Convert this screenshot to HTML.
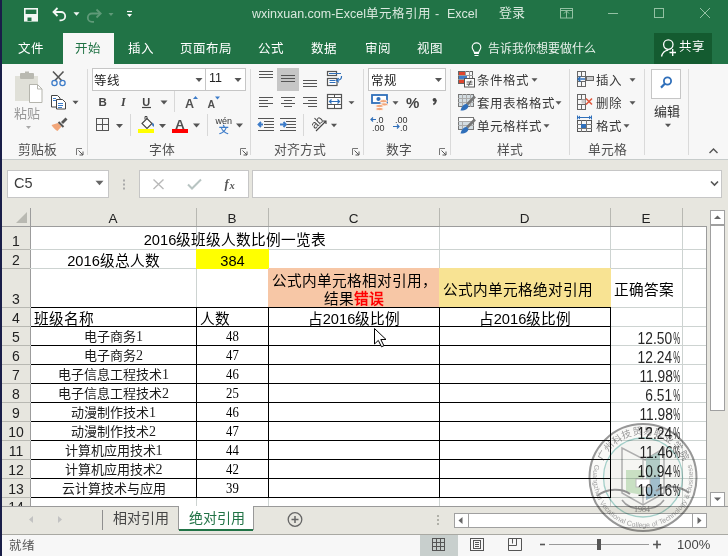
<!DOCTYPE html><html lang="zh-CN"><head><meta charset="utf-8"><style>
*{margin:0;padding:0;box-sizing:border-box}
html,body{width:728px;height:556px;overflow:hidden;background:#e7e6df;font-family:"Liberation Sans",sans-serif;color:#222;position:relative}
.a{position:absolute}
.nw{white-space:nowrap}
</style></head><body>
<div class="a" style="left:0;top:0;width:728px;height:64px;background:#217346"></div>
<div class="a" style="left:0;top:0;width:2px;height:556px;background:#191e48;z-index:60"></div>
<div class="a" style="left:0;top:64px;width:728px;height:95px;background:#f7f7f7"></div>
<div class="a" style="left:0;top:159px;width:728px;height:1px;background:#c7cccb"></div>
<div class="a" style="left:252px;top:3px;font-size:12.5px;color:#d9e8de;white-space:nowrap">wxinxuan.com-Excel单元格引用</div>
<div class="a" style="left:435px;top:7px;font-size:12.5px;color:#d9e8de;white-space:nowrap">-</div>
<div class="a" style="left:447px;top:7px;font-size:12.5px;color:#d9e8de;white-space:nowrap">Excel</div>
<div class="a" style="left:499px;top:2px;font-size:13px;color:#d9e8de;white-space:nowrap">登录</div>
<div class="a" style="left:63px;top:33px;width:51px;height:31px;background:#f7f7f7"></div>
<div class="a" style="left:18px;top:38px;font-size:12.5px;color:#fff;white-space:nowrap">文件</div>
<div class="a" style="left:75px;top:38px;font-size:12.5px;color:#217346;white-space:nowrap">开始</div>
<div class="a" style="left:128px;top:38px;font-size:12.5px;color:#fff;white-space:nowrap">插入</div>
<div class="a" style="left:180px;top:38px;font-size:12.5px;color:#fff;white-space:nowrap">页面布局</div>
<div class="a" style="left:258px;top:38px;font-size:12.5px;color:#fff;white-space:nowrap">公式</div>
<div class="a" style="left:311px;top:38px;font-size:12.5px;color:#fff;white-space:nowrap">数据</div>
<div class="a" style="left:365px;top:38px;font-size:12.5px;color:#fff;white-space:nowrap">审阅</div>
<div class="a" style="left:417px;top:38px;font-size:12.5px;color:#fff;white-space:nowrap">视图</div>
<div class="a" style="left:488px;top:39px;font-size:12px;color:#e8f1eb;white-space:nowrap">告诉我你想要做什么</div>
<div class="a" style="left:654px;top:33px;width:58px;height:31px;background:#145b30"></div>
<div class="a" style="left:679px;top:36px;font-size:12.5px;color:#fff;white-space:nowrap">共享</div>
<div class="a" style="left:92px;top:68px;width:114px;height:23px;background:#fff;border:1px solid #c6c6c6"></div>
<div class="a" style="left:205px;top:68px;width:41px;height:23px;background:#fff;border:1px solid #c6c6c6"></div>
<div class="a" style="left:94px;top:70px;font-size:12.5px;color:#222;white-space:nowrap">等线</div>
<div class="a" style="left:209px;top:71px;font-size:12.5px;color:#222;white-space:nowrap">11</div>
<div class="a" style="left:368px;top:68px;width:78px;height:23px;background:#fff;border:1px solid #c6c6c6"></div>
<div class="a" style="left:371px;top:70px;font-size:12.5px;color:#222;white-space:nowrap">常规</div>
<div class="a" style="left:277px;top:68px;width:22px;height:23px;background:#c6c6c6"></div>
<div class="a" style="left:651px;top:69px;width:30px;height:30px;background:#fff;border:1px solid #c6c6c6"></div>
<div class="a" style="left:14px;top:103px;font-size:13px;color:#999;white-space:nowrap">粘贴</div>
<div class="a" style="left:477px;top:70px;font-size:12.5px;color:#3a3a3a;white-space:nowrap">条件格式</div>
<div class="a" style="left:477px;top:93px;font-size:12.5px;color:#3a3a3a;white-space:nowrap">套用表格格式</div>
<div class="a" style="left:477px;top:116px;font-size:12.5px;color:#3a3a3a;white-space:nowrap">单元格样式</div>
<div class="a" style="left:596px;top:70px;font-size:12.5px;color:#3a3a3a;white-space:nowrap">插入</div>
<div class="a" style="left:596px;top:93px;font-size:12.5px;color:#3a3a3a;white-space:nowrap">删除</div>
<div class="a" style="left:596px;top:116px;font-size:12.5px;color:#3a3a3a;white-space:nowrap">格式</div>
<div class="a" style="left:654px;top:101px;font-size:13px;color:#333;white-space:nowrap">编辑</div>
<div class="a" style="left:18px;top:139px;font-size:12.8px;color:#505050;white-space:nowrap">剪贴板</div>
<div class="a" style="left:149px;top:139px;font-size:12.8px;color:#505050;white-space:nowrap">字体</div>
<div class="a" style="left:274px;top:139px;font-size:12.8px;color:#505050;white-space:nowrap">对齐方式</div>
<div class="a" style="left:386px;top:139px;font-size:12.8px;color:#505050;white-space:nowrap">数字</div>
<div class="a" style="left:497px;top:139px;font-size:12.8px;color:#505050;white-space:nowrap">样式</div>
<div class="a" style="left:588px;top:139px;font-size:12.8px;color:#505050;white-space:nowrap">单元格</div>
<div class="a" style="left:87px;top:69px;width:1px;height:86px;background:#dadada"></div>
<div class="a" style="left:250px;top:69px;width:1px;height:86px;background:#dadada"></div>
<div class="a" style="left:363px;top:69px;width:1px;height:86px;background:#dadada"></div>
<div class="a" style="left:450px;top:69px;width:1px;height:86px;background:#dadada"></div>
<div class="a" style="left:569px;top:69px;width:1px;height:86px;background:#dadada"></div>
<div class="a" style="left:644px;top:69px;width:1px;height:86px;background:#dadada"></div>
<div class="a" style="left:688px;top:69px;width:1px;height:86px;background:#dadada"></div>
<div class="a" style="left:7px;top:170px;width:102px;height:28px;background:#fff;border:1px solid #c6c6c6"></div>
<div class="a nw" style="left:14px;top:175px;font-size:14.5px;color:#3c3c3c">C5</div>
<div class="a" style="left:139px;top:170px;width:110px;height:28px;background:#fff;border:1px solid #c6c6c6"></div>
<div class="a" style="left:252px;top:170px;width:470px;height:28px;background:#fff;border:1px solid #c6c6c6"></div>
<div class="a" style="left:31px;top:227px;width:675px;height:279px;background:#fff"></div>
<div class="a" style="left:196px;top:208px;width:1px;height:18px;background:#b8b8b2"></div>
<div class="a" style="left:268px;top:208px;width:1px;height:18px;background:#b8b8b2"></div>
<div class="a" style="left:439px;top:208px;width:1px;height:18px;background:#b8b8b2"></div>
<div class="a" style="left:610px;top:208px;width:1px;height:18px;background:#b8b8b2"></div>
<div class="a" style="left:682px;top:208px;width:1px;height:18px;background:#b8b8b2"></div>
<div class="a" style="left:2px;top:226px;width:704px;height:1px;background:#9c9c9c"></div>
<div class="a" style="left:30px;top:208px;width:1px;height:298px;background:#9c9c9c"></div>
<div class="a" style="left:196px;top:227px;width:1px;height:279px;background:#cdd3d1"></div>
<div class="a" style="left:268px;top:227px;width:1px;height:279px;background:#cdd3d1"></div>
<div class="a" style="left:439px;top:227px;width:1px;height:279px;background:#cdd3d1"></div>
<div class="a" style="left:610px;top:227px;width:1px;height:279px;background:#cdd3d1"></div>
<div class="a" style="left:682px;top:227px;width:1px;height:279px;background:#cdd3d1"></div>
<div class="a" style="left:2px;top:249px;width:704px;height:1px;background:#cdd3d1"></div>
<div class="a" style="left:2px;top:268px;width:704px;height:1px;background:#cdd3d1"></div>
<div class="a" style="left:2px;top:307px;width:704px;height:1px;background:#cdd3d1"></div>
<div class="a" style="left:2px;top:326px;width:704px;height:1px;background:#cdd3d1"></div>
<div class="a" style="left:2px;top:345px;width:704px;height:1px;background:#cdd3d1"></div>
<div class="a" style="left:2px;top:364px;width:704px;height:1px;background:#cdd3d1"></div>
<div class="a" style="left:2px;top:383px;width:704px;height:1px;background:#cdd3d1"></div>
<div class="a" style="left:2px;top:402px;width:704px;height:1px;background:#cdd3d1"></div>
<div class="a" style="left:2px;top:421px;width:704px;height:1px;background:#cdd3d1"></div>
<div class="a" style="left:2px;top:440px;width:704px;height:1px;background:#cdd3d1"></div>
<div class="a" style="left:2px;top:459px;width:704px;height:1px;background:#cdd3d1"></div>
<div class="a" style="left:2px;top:478px;width:704px;height:1px;background:#cdd3d1"></div>
<div class="a" style="left:2px;top:497px;width:704px;height:1px;background:#cdd3d1"></div>
<div class="a" style="left:2px;top:249px;width:28px;height:1px;background:#b8b8b2"></div>
<div class="a" style="left:2px;top:268px;width:28px;height:1px;background:#b8b8b2"></div>
<div class="a" style="left:2px;top:307px;width:28px;height:1px;background:#b8b8b2"></div>
<div class="a" style="left:2px;top:326px;width:28px;height:1px;background:#b8b8b2"></div>
<div class="a" style="left:2px;top:345px;width:28px;height:1px;background:#b8b8b2"></div>
<div class="a" style="left:2px;top:364px;width:28px;height:1px;background:#b8b8b2"></div>
<div class="a" style="left:2px;top:383px;width:28px;height:1px;background:#b8b8b2"></div>
<div class="a" style="left:2px;top:402px;width:28px;height:1px;background:#b8b8b2"></div>
<div class="a" style="left:2px;top:421px;width:28px;height:1px;background:#b8b8b2"></div>
<div class="a" style="left:2px;top:440px;width:28px;height:1px;background:#b8b8b2"></div>
<div class="a" style="left:2px;top:459px;width:28px;height:1px;background:#b8b8b2"></div>
<div class="a" style="left:2px;top:478px;width:28px;height:1px;background:#b8b8b2"></div>
<div class="a" style="left:2px;top:497px;width:28px;height:1px;background:#b8b8b2"></div>
<div class="a" style="left:706px;top:226px;width:1px;height:280px;background:#9c9c9c"></div>
<div class="a" style="left:2px;top:506px;width:726px;height:1px;background:#9a9a9a;z-index:5"></div>
<div class="a nw" style="left:30px;top:211px;width:166px;text-align:center;font-size:13.5px;color:#222">A</div>
<div class="a nw" style="left:196px;top:211px;width:72px;text-align:center;font-size:13.5px;color:#222">B</div>
<div class="a nw" style="left:268px;top:211px;width:171px;text-align:center;font-size:13.5px;color:#222">C</div>
<div class="a nw" style="left:439px;top:211px;width:171px;text-align:center;font-size:13.5px;color:#222">D</div>
<div class="a nw" style="left:610px;top:211px;width:72px;text-align:center;font-size:13.5px;color:#222">E</div>
<div class="a nw" style="left:2px;top:233px;width:28px;height:16px;line-height:16px;text-align:center;font-size:14px;color:#222">1</div>
<div class="a nw" style="left:2px;top:252px;width:28px;height:16px;line-height:16px;text-align:center;font-size:14px;color:#222">2</div>
<div class="a nw" style="left:2px;top:291px;width:28px;height:16px;line-height:16px;text-align:center;font-size:14px;color:#222">3</div>
<div class="a nw" style="left:2px;top:310px;width:28px;height:16px;line-height:16px;text-align:center;font-size:14px;color:#222">4</div>
<div class="a nw" style="left:2px;top:329px;width:28px;height:16px;line-height:16px;text-align:center;font-size:14px;color:#222">5</div>
<div class="a nw" style="left:2px;top:348px;width:28px;height:16px;line-height:16px;text-align:center;font-size:14px;color:#222">6</div>
<div class="a nw" style="left:2px;top:367px;width:28px;height:16px;line-height:16px;text-align:center;font-size:14px;color:#222">7</div>
<div class="a nw" style="left:2px;top:386px;width:28px;height:16px;line-height:16px;text-align:center;font-size:14px;color:#222">8</div>
<div class="a nw" style="left:2px;top:405px;width:28px;height:16px;line-height:16px;text-align:center;font-size:14px;color:#222">9</div>
<div class="a nw" style="left:2px;top:424px;width:28px;height:16px;line-height:16px;text-align:center;font-size:14px;color:#222">10</div>
<div class="a nw" style="left:2px;top:443px;width:28px;height:16px;line-height:16px;text-align:center;font-size:14px;color:#222">11</div>
<div class="a nw" style="left:2px;top:462px;width:28px;height:16px;line-height:16px;text-align:center;font-size:14px;color:#222">12</div>
<div class="a nw" style="left:2px;top:481px;width:28px;height:16px;line-height:16px;text-align:center;font-size:14px;color:#222">13</div>
<div class="a nw" style="left:2px;top:498px;width:28px;height:8px;overflow:hidden;text-align:center;font-size:14px;line-height:18px;color:#222">14</div>
<div class="a" style="left:196px;top:249px;width:73px;height:20px;background:#ffff00;z-index:2"></div>
<div class="a" style="left:268px;top:268px;width:172px;height:39px;background:#f7c7a6;z-index:2"></div>
<div class="a" style="left:439px;top:268px;width:172px;height:39px;background:#f8e393;z-index:2"></div>
<div class="a" style="left:31px;top:307px;width:580px;height:1px;background:#000;z-index:4"></div>
<div class="a" style="left:31px;top:326px;width:580px;height:1px;background:#000;z-index:4"></div>
<div class="a" style="left:31px;top:345px;width:580px;height:1px;background:#000;z-index:4"></div>
<div class="a" style="left:31px;top:364px;width:580px;height:1px;background:#000;z-index:4"></div>
<div class="a" style="left:31px;top:383px;width:580px;height:1px;background:#000;z-index:4"></div>
<div class="a" style="left:31px;top:402px;width:580px;height:1px;background:#000;z-index:4"></div>
<div class="a" style="left:31px;top:421px;width:580px;height:1px;background:#000;z-index:4"></div>
<div class="a" style="left:31px;top:440px;width:580px;height:1px;background:#000;z-index:4"></div>
<div class="a" style="left:31px;top:459px;width:580px;height:1px;background:#000;z-index:4"></div>
<div class="a" style="left:31px;top:478px;width:580px;height:1px;background:#000;z-index:4"></div>
<div class="a" style="left:31px;top:497px;width:580px;height:1px;background:#000;z-index:4"></div>
<div class="a" style="left:196px;top:307px;width:1px;height:191px;background:#000;z-index:4"></div>
<div class="a" style="left:268px;top:307px;width:1px;height:191px;background:#000;z-index:4"></div>
<div class="a" style="left:439px;top:307px;width:1px;height:191px;background:#000;z-index:4"></div>
<div class="a" style="left:610px;top:307px;width:1px;height:191px;background:#000;z-index:4"></div>
<div class="a" style="z-index:3;left:34px;top:227px;width:402px;height:22px;display:flex;align-items:center;justify-content:center;font-size:14.67px;color:#000;white-space:nowrap"><span>2016级班级人数比例一览表</span></div>
<div class="a" style="z-index:3;left:34px;top:250px;width:159px;height:18px;display:flex;align-items:center;justify-content:center;font-size:14.67px;color:#000;white-space:nowrap"><span>2016级总人数</span></div>
<div class="a" style="z-index:3;left:200px;top:252px;width:65px;height:18px;display:flex;align-items:center;justify-content:center;font-size:14.67px;color:#000;white-space:nowrap"><span>384</span></div>
<div class="a" style="z-index:3;left:269px;top:272px;width:170px;height:38px;font-size:14.67px;line-height:18px;text-align:center;color:#000">公式内单元格相对引用，<br>结果<b style="color:#ff0000">错误</b></div>
<div class="a" style="z-index:3;left:443px;top:269px;width:164px;height:38px;display:flex;align-items:center;justify-content:flex-start;font-size:14.67px;color:#000;white-space:nowrap"><span>公式内单元格绝对引用</span></div>
<div class="a" style="z-index:3;left:614px;top:269px;width:65px;height:38px;display:flex;align-items:center;justify-content:flex-start;font-size:14.67px;color:#000;white-space:nowrap"><span>正确答案</span></div>
<div class="a" style="z-index:3;left:34px;top:308px;width:159px;height:18px;display:flex;align-items:center;justify-content:flex-start;font-size:14.67px;color:#000;white-space:nowrap"><span>班级名称</span></div>
<div class="a" style="z-index:3;left:200px;top:308px;width:65px;height:18px;display:flex;align-items:center;justify-content:flex-start;font-size:14.67px;color:#000;white-space:nowrap"><span>人数</span></div>
<div class="a" style="z-index:3;left:272px;top:308px;width:164px;height:18px;display:flex;align-items:center;justify-content:center;font-size:14.67px;color:#000;white-space:nowrap"><span>占2016级比例</span></div>
<div class="a" style="z-index:3;left:443px;top:308px;width:164px;height:18px;display:flex;align-items:center;justify-content:center;font-size:14.67px;color:#000;white-space:nowrap"><span>占2016级比例</span></div>
<div class="a" style="z-index:3;left:34px;top:326px;width:159px;height:18px;display:flex;align-items:center;justify-content:center;font-size:13px;color:#1a1a1a;white-space:nowrap"><span>电子商务<span style="font-family:Liberation Serif,serif;font-size:14px">1</span></span></div>
<div class="a" style="z-index:3;left:200px;top:327px;width:65px;height:18px;display:flex;align-items:center;justify-content:center;font-family:Liberation Serif,serif;font-size:14.5px;color:#000;white-space:nowrap;transform:scaleX(.88)"><span>48</span></div>
<div class="a" style="z-index:3;right:55.5px;top:331px;font-size:16px;line-height:15px;color:#262626;white-space:nowrap;transform:scaleX(.86);transform-origin:right">12.50</div>
<div class="a" style="z-index:3;right:48px;top:331px;font-size:16px;line-height:15px;color:#262626;white-space:nowrap;transform:scaleX(.49);transform-origin:right">%</div>
<div class="a" style="z-index:3;left:34px;top:345px;width:159px;height:18px;display:flex;align-items:center;justify-content:center;font-size:13px;color:#1a1a1a;white-space:nowrap"><span>电子商务<span style="font-family:Liberation Serif,serif;font-size:14px">2</span></span></div>
<div class="a" style="z-index:3;left:200px;top:346px;width:65px;height:18px;display:flex;align-items:center;justify-content:center;font-family:Liberation Serif,serif;font-size:14.5px;color:#000;white-space:nowrap;transform:scaleX(.88)"><span>47</span></div>
<div class="a" style="z-index:3;right:55.5px;top:350px;font-size:16px;line-height:15px;color:#262626;white-space:nowrap;transform:scaleX(.86);transform-origin:right">12.24</div>
<div class="a" style="z-index:3;right:48px;top:350px;font-size:16px;line-height:15px;color:#262626;white-space:nowrap;transform:scaleX(.49);transform-origin:right">%</div>
<div class="a" style="z-index:3;left:34px;top:364px;width:159px;height:18px;display:flex;align-items:center;justify-content:center;font-size:13px;color:#1a1a1a;white-space:nowrap"><span>电子信息工程技术<span style="font-family:Liberation Serif,serif;font-size:14px">1</span></span></div>
<div class="a" style="z-index:3;left:200px;top:365px;width:65px;height:18px;display:flex;align-items:center;justify-content:center;font-family:Liberation Serif,serif;font-size:14.5px;color:#000;white-space:nowrap;transform:scaleX(.88)"><span>46</span></div>
<div class="a" style="z-index:3;right:55.5px;top:369px;font-size:16px;line-height:15px;color:#262626;white-space:nowrap;transform:scaleX(.86);transform-origin:right">11.98</div>
<div class="a" style="z-index:3;right:48px;top:369px;font-size:16px;line-height:15px;color:#262626;white-space:nowrap;transform:scaleX(.49);transform-origin:right">%</div>
<div class="a" style="z-index:3;left:34px;top:383px;width:159px;height:18px;display:flex;align-items:center;justify-content:center;font-size:13px;color:#1a1a1a;white-space:nowrap"><span>电子信息工程技术<span style="font-family:Liberation Serif,serif;font-size:14px">2</span></span></div>
<div class="a" style="z-index:3;left:200px;top:384px;width:65px;height:18px;display:flex;align-items:center;justify-content:center;font-family:Liberation Serif,serif;font-size:14.5px;color:#000;white-space:nowrap;transform:scaleX(.88)"><span>25</span></div>
<div class="a" style="z-index:3;right:55.5px;top:388px;font-size:16px;line-height:15px;color:#262626;white-space:nowrap;transform:scaleX(.86);transform-origin:right">6.51</div>
<div class="a" style="z-index:3;right:48px;top:388px;font-size:16px;line-height:15px;color:#262626;white-space:nowrap;transform:scaleX(.49);transform-origin:right">%</div>
<div class="a" style="z-index:3;left:34px;top:402px;width:159px;height:18px;display:flex;align-items:center;justify-content:center;font-size:13px;color:#1a1a1a;white-space:nowrap"><span>动漫制作技术<span style="font-family:Liberation Serif,serif;font-size:14px">1</span></span></div>
<div class="a" style="z-index:3;left:200px;top:403px;width:65px;height:18px;display:flex;align-items:center;justify-content:center;font-family:Liberation Serif,serif;font-size:14.5px;color:#000;white-space:nowrap;transform:scaleX(.88)"><span>46</span></div>
<div class="a" style="z-index:3;right:55.5px;top:407px;font-size:16px;line-height:15px;color:#262626;white-space:nowrap;transform:scaleX(.86);transform-origin:right">11.98</div>
<div class="a" style="z-index:3;right:48px;top:407px;font-size:16px;line-height:15px;color:#262626;white-space:nowrap;transform:scaleX(.49);transform-origin:right">%</div>
<div class="a" style="z-index:3;left:34px;top:421px;width:159px;height:18px;display:flex;align-items:center;justify-content:center;font-size:13px;color:#1a1a1a;white-space:nowrap"><span>动漫制作技术<span style="font-family:Liberation Serif,serif;font-size:14px">2</span></span></div>
<div class="a" style="z-index:3;left:200px;top:422px;width:65px;height:18px;display:flex;align-items:center;justify-content:center;font-family:Liberation Serif,serif;font-size:14.5px;color:#000;white-space:nowrap;transform:scaleX(.88)"><span>47</span></div>
<div class="a" style="z-index:3;right:55.5px;top:426px;font-size:16px;line-height:15px;color:#262626;white-space:nowrap;transform:scaleX(.86);transform-origin:right">12.24</div>
<div class="a" style="z-index:3;right:48px;top:426px;font-size:16px;line-height:15px;color:#262626;white-space:nowrap;transform:scaleX(.49);transform-origin:right">%</div>
<div class="a" style="z-index:3;left:34px;top:440px;width:159px;height:18px;display:flex;align-items:center;justify-content:center;font-size:13px;color:#1a1a1a;white-space:nowrap"><span>计算机应用技术<span style="font-family:Liberation Serif,serif;font-size:14px">1</span></span></div>
<div class="a" style="z-index:3;left:200px;top:441px;width:65px;height:18px;display:flex;align-items:center;justify-content:center;font-family:Liberation Serif,serif;font-size:14.5px;color:#000;white-space:nowrap;transform:scaleX(.88)"><span>44</span></div>
<div class="a" style="z-index:3;right:55.5px;top:445px;font-size:16px;line-height:15px;color:#262626;white-space:nowrap;transform:scaleX(.86);transform-origin:right">11.46</div>
<div class="a" style="z-index:3;right:48px;top:445px;font-size:16px;line-height:15px;color:#262626;white-space:nowrap;transform:scaleX(.49);transform-origin:right">%</div>
<div class="a" style="z-index:3;left:34px;top:459px;width:159px;height:18px;display:flex;align-items:center;justify-content:center;font-size:13px;color:#1a1a1a;white-space:nowrap"><span>计算机应用技术<span style="font-family:Liberation Serif,serif;font-size:14px">2</span></span></div>
<div class="a" style="z-index:3;left:200px;top:460px;width:65px;height:18px;display:flex;align-items:center;justify-content:center;font-family:Liberation Serif,serif;font-size:14.5px;color:#000;white-space:nowrap;transform:scaleX(.88)"><span>42</span></div>
<div class="a" style="z-index:3;right:55.5px;top:464px;font-size:16px;line-height:15px;color:#262626;white-space:nowrap;transform:scaleX(.86);transform-origin:right">10.94</div>
<div class="a" style="z-index:3;right:48px;top:464px;font-size:16px;line-height:15px;color:#262626;white-space:nowrap;transform:scaleX(.49);transform-origin:right">%</div>
<div class="a" style="z-index:3;left:34px;top:478px;width:159px;height:18px;display:flex;align-items:center;justify-content:center;font-size:13px;color:#1a1a1a;white-space:nowrap"><span>云计算技术与应用</span></div>
<div class="a" style="z-index:3;left:200px;top:479px;width:65px;height:18px;display:flex;align-items:center;justify-content:center;font-family:Liberation Serif,serif;font-size:14.5px;color:#000;white-space:nowrap;transform:scaleX(.88)"><span>39</span></div>
<div class="a" style="z-index:3;right:55.5px;top:483px;font-size:16px;line-height:15px;color:#262626;white-space:nowrap;transform:scaleX(.86);transform-origin:right">10.16</div>
<div class="a" style="z-index:3;right:48px;top:483px;font-size:16px;line-height:15px;color:#262626;white-space:nowrap;transform:scaleX(.49);transform-origin:right">%</div>
<div class="a" style="left:710px;top:210px;width:15px;height:15px;background:#fff;border:1px solid #a0a0a0"></div>
<div class="a" style="left:710px;top:225px;width:15px;height:186px;background:#fff;border:1px solid #a0a0a0"></div>
<div class="a" style="left:710px;top:492px;width:15px;height:15px;background:#fff;border:1px solid #a0a0a0"></div>
<div class="a" style="left:2px;top:534px;width:726px;height:1px;background:#a9a9a3;z-index:5"></div>
<div class="a" style="left:102px;top:510px;width:1px;height:20px;background:#8f8f8f"></div>
<div class="a" style="left:178px;top:506px;width:76px;height:24px;background:#fff;border-left:1px solid #999;border-right:1px solid #999;z-index:6"></div>
<div class="a" style="left:179px;top:529px;width:74px;height:2px;background:#217346;z-index:7"></div>
<div class="a nw" style="left:113px;top:507px;font-size:14px;color:#444">相对引用</div>
<div class="a nw" style="left:189px;top:507px;font-size:14px;color:#217346;z-index:7">绝对引用</div>
<div class="a" style="left:454px;top:513px;width:15px;height:15px;background:#fff;border:1px solid #a0a0a0"></div>
<div class="a" style="left:468px;top:513px;width:225px;height:15px;background:#fff;border:1px solid #a0a0a0"></div>
<div class="a" style="left:692px;top:513px;width:15px;height:15px;background:#fff;border:1px solid #a0a0a0"></div>
<div class="a" style="left:0;top:535px;width:728px;height:21px;background:#f7f7f7"></div>
<div class="a" style="left:420px;top:535px;width:38px;height:21px;background:#c8cfcd"></div>
<div class="a nw" style="left:9px;top:535px;font-size:12.5px;color:#555">就绪</div>
<div class="a nw" style="left:677px;top:537px;font-size:13px;color:#444">100%</div>
<svg class="a" style="left:0;top:0;z-index:30" width="728" height="556" viewBox="0 0 728 556"><rect x="24.8" y="8.8" width="12.4" height="12" fill="none" stroke="#f3f7f4" stroke-width="1.6"/><rect x="24.5" y="14" width="13" height="7" fill="#f3f7f4"/><rect x="27.5" y="17.5" width="4" height="3.5" fill="#217346"/><path d="M54 12h7a4.2 4.2 0 0 1 0 8.4h-1.5" fill="none" stroke="#f3f7f4" stroke-width="1.8"/><path d="M57.5 8l-4 4 4 4" fill="none" stroke="#f3f7f4" stroke-width="1.8"/><path d="M73.5 12.25h6l-3.0 3.5z" fill="#f3f7f4"/><path d="M100 13.5h-8a4.2 4.2 0 0 0 0 8.4h2" fill="none" stroke="#5f9a78" stroke-width="1.8"/><path d="M96.5 9.5l4.2 4-4.2 4" fill="none" stroke="#5f9a78" stroke-width="1.8"/><path d="M108.5 13.0h5l-2.5 3z" fill="#5f9a78"/><path d="M127 11.5h5" stroke="#fff" stroke-width="1.2"/><path d="M127.0 14.0h5l-2.5 3z" fill="#fff"/><rect x="560.5" y="8.5" width="12" height="9.5" fill="none" stroke="#93c1a3" stroke-width="1"/><path d="M560.5 10.5h12M566.5 10.5v7.5M564 13.5l2.5-2.5 2.5 2.5" fill="none" stroke="#93c1a3" stroke-width="1"/><path d="M608 13.5h10" stroke="#93c1a3" stroke-width="1"/><rect x="654.5" y="8.5" width="9" height="9" fill="none" stroke="#93c1a3" stroke-width="1"/><path d="M700 8l10 10M710 8l-10 10" stroke="#93c1a3" stroke-width="1"/><path d="M472.2 47.2a4.3 4.3 0 1 1 8.6 0c0 2.2-1.7 3.2-2 5h-4.6c-.3-1.8-2-2.8-2-5z" fill="none" stroke="#fff" stroke-width="1.1"/><rect x="474" y="52" width="5" height="2" fill="#fff"/><path d="M474.5 55.5h4" stroke="#fff" stroke-width="1"/><circle cx="668.3" cy="44.6" r="4.7" fill="none" stroke="#fff" stroke-width="1.3"/><path d="M661.5 56.5c.8-3.5 3.3-6 6.8-6.4" fill="none" stroke="#fff" stroke-width="1.3"/><path d="M669.5 52.5h6.5M672.7 49v7" stroke="#fff" stroke-width="1.3"/><rect x="15" y="76" width="23" height="25" fill="#e0e0d8"/><rect x="20" y="73" width="14" height="6" rx="1" fill="#b9b9b1"/><rect x="25" y="71.5" width="4" height="3" fill="#b9b9b1"/><path d="M29.5 84.5h8l4.5 4.5v13.5h-12.5z" fill="#fff" stroke="#b5b5ad" stroke-width="1"/><path d="M37.5 84.5v4.5h4.5" fill="none" stroke="#b5b5ad" stroke-width="1"/><path d="M26.0 126.0h5l-2.5 3z" fill="#a8a8a8"/><path d="M53 71.5l9 9.5M63.5 71.5l-9 9.5" stroke="#555" stroke-width="1.6"/><circle cx="54.5" cy="83" r="2.6" fill="none" stroke="#3d7cc9" stroke-width="1.3"/><circle cx="62.5" cy="83" r="2.6" fill="none" stroke="#3d7cc9" stroke-width="1.3"/><path d="M51.5 95.5h6l2.5 2.5v9h-8.5z" fill="#fff" stroke="#444" stroke-width="1"/><path d="M56.5 99.5h6l3 3v6.5h-9z" fill="#fff" stroke="#444" stroke-width="1"/><path d="M53 98.5h3M53 100.5h3M58 103.5h5M58 105.5h5M58 107.5h4" stroke="#3d7cc9" stroke-width="1"/><path d="M72.5 100.75h6l-3.0 3.5z" fill="#555"/><path d="M61 122l4.5-4.5 2 2-4.5 4.5z" fill="#555"/><path d="M58 123l3.5 3.5-4 4.5c-1.5-.5-4.5-3.5-6-6z" fill="#f2a679"/><path d="M58.5 122l5 5" stroke="#555" stroke-width="2"/><path d="M76.5 155V148.5H82" fill="none" stroke="#777" stroke-width="1"/><path d="M78.5 150.5l4.5 4.5M83 151.5v3.5h-3.5" fill="none" stroke="#555" stroke-width="1"/><path d="M240.5 155V148.5H246" fill="none" stroke="#777" stroke-width="1"/><path d="M242.5 150.5l4.5 4.5M247 151.5v3.5h-3.5" fill="none" stroke="#555" stroke-width="1"/><path d="M352.5 155V148.5H358" fill="none" stroke="#777" stroke-width="1"/><path d="M354.5 150.5l4.5 4.5M359 151.5v3.5h-3.5" fill="none" stroke="#555" stroke-width="1"/><path d="M439.5 155V148.5H445" fill="none" stroke="#777" stroke-width="1"/><path d="M441.5 150.5l4.5 4.5M446 151.5v3.5h-3.5" fill="none" stroke="#555" stroke-width="1"/><path d="M195.5 78.0h7l-3.5 4z" fill="#555"/><path d="M234.5 78.0h7l-3.5 4z" fill="#555"/><path d="M435.0 78.0h7l-3.5 4z" fill="#555"/><text x="98.5" y="106" font-family="Liberation Sans" font-weight="bold" font-size="11.5" fill="#444">B</text><text x="121" y="106" font-family="Liberation Serif" font-style="italic" font-weight="bold" font-size="12" fill="#444">I</text><text x="142.2" y="106" font-family="Liberation Sans" font-weight="bold" font-size="11" fill="#444">U</text><path d="M142 107.5H151" stroke="#444" stroke-width="1.2"/><path d="M160.5 100.5h7l-3.5 4z" fill="#555"/><path d="M174.5 91V112" stroke="#d8d8d8" stroke-width="1"/><text x="185" y="108" font-family="Liberation Sans" font-weight="bold" font-size="12.5" fill="#505050">A</text><path d="M193 99h5l-2.5-3z" fill="#3d7cc9"/><text x="207.5" y="108" font-family="Liberation Sans" font-weight="bold" font-size="10.5" fill="#505050">A</text><path d="M215 96.5h5l-2.5 3z" fill="#3d7cc9"/><rect x="96.5" y="118.5" width="12" height="12" fill="none" stroke="#555" stroke-width="1"/><path d="M96 124.5H109" stroke="#555" stroke-width="1"/><path d="M102.5 118V131" stroke="#555" stroke-width="1"/><path d="M116.0 124.0h7l-3.5 4z" fill="#555"/><path d="M130.5 114V136" stroke="#d8d8d8" stroke-width="1"/><path d="M142 123.5l5-5 5 5-5 5z" fill="#fff" stroke="#444" stroke-width="1.1"/><path d="M145 119.5v-3h2v3" fill="none" stroke="#444" stroke-width="1"/><path d="M152.5 122.5c1.5 1 2 3 1 4.5l-1.5-2z" fill="#2f6fba"/><rect x="138" y="129" width="16" height="4" fill="#ffff00"/><path d="M159.0 124.0h7l-3.5 4z" fill="#555"/><text x="175" y="129" font-family="Liberation Sans" font-weight="bold" font-size="13.5" fill="#505050">A</text><rect x="172" y="129" width="16" height="4" fill="#ff0000"/><path d="M193.0 123.5h7l-3.5 4z" fill="#555"/><path d="M207.5 114V136" stroke="#d8d8d8" stroke-width="1"/><text x="215.5" y="124" font-family="Liberation Sans" font-size="9" fill="#333">wén</text><text x="219" y="133" font-family="Liberation Sans" font-size="9.5" font-weight="bold" fill="#3d7cc9">文</text><path d="M236.0 123.5h7l-3.5 4z" fill="#555"/><path d="M259 71.5H273" stroke="#555" stroke-width="1"/><path d="M259 74.5H273" stroke="#555" stroke-width="1"/><path d="M259 77.5H273" stroke="#555" stroke-width="1"/><path d="M281 75.5H295" stroke="#555" stroke-width="1"/><path d="M281 78.5H295" stroke="#555" stroke-width="1"/><path d="M281 81.5H295" stroke="#555" stroke-width="1"/><path d="M303 80.5H317" stroke="#555" stroke-width="1"/><path d="M303 83.5H317" stroke="#555" stroke-width="1"/><path d="M303 86.5H317" stroke="#555" stroke-width="1"/><rect x="327.5" y="71.5" width="9" height="4" fill="#fff" stroke="#555" stroke-width="1.2"/><path d="M329 73.5h12" stroke="#2f6fba" stroke-width="1"/><rect x="327.5" y="78.5" width="9.5" height="7" fill="#fff" stroke="#555" stroke-width="1.2"/><path d="M329.5 80.5h6M329.5 82.5h6" stroke="#2f6fba" stroke-width="1"/><path d="M341.5 76c.3 2.5-1.2 4.2-4.5 4.3" fill="none" stroke="#2f6fba" stroke-width="1.2"/><path d="M338.8 78.2l-2.2 2.1 2.2 2.1" fill="none" stroke="#2f6fba" stroke-width="1.2"/><path d="M259 97.5H273" stroke="#555" stroke-width="1"/><path d="M281 97.5H295" stroke="#555" stroke-width="1"/><path d="M303 97.5H317" stroke="#555" stroke-width="1"/><path d="M259 100.5H268" stroke="#555" stroke-width="1"/><path d="M284 100.5H292" stroke="#555" stroke-width="1"/><path d="M308 100.5H317" stroke="#555" stroke-width="1"/><path d="M259 103.5H273" stroke="#555" stroke-width="1"/><path d="M281 103.5H295" stroke="#555" stroke-width="1"/><path d="M303 103.5H317" stroke="#555" stroke-width="1"/><path d="M259 106.5H268" stroke="#555" stroke-width="1"/><path d="M284 106.5H292" stroke="#555" stroke-width="1"/><path d="M308 106.5H317" stroke="#555" stroke-width="1"/><rect x="327.5" y="94.5" width="14" height="14" fill="#fff" stroke="#555" stroke-width="1.2"/><path d="M327 97.5H342" stroke="#555" stroke-width="1"/><path d="M327 104.5H342" stroke="#555" stroke-width="1"/><path d="M334.5 94V98" stroke="#555" stroke-width="1"/><path d="M334.5 105V109" stroke="#555" stroke-width="1"/><path d="M329.5 101.5h10" stroke="#2f6fba" stroke-width="1"/><path d="M331.5 99.5l-2 2 2 2M337.5 99.5l2 2-2 2" fill="none" stroke="#2f6fba" stroke-width="1.2"/><path d="M348.5 101.2h6l-3.0 3z" fill="#555"/><path d="M258 118.5H274" stroke="#555" stroke-width="1"/><path d="M264 121.5H274" stroke="#555" stroke-width="1"/><path d="M264 124.5H274" stroke="#555" stroke-width="1"/><path d="M264 127.5H274" stroke="#555" stroke-width="1"/><path d="M258 130.5H274" stroke="#555" stroke-width="1"/><path d="M258 124.5h5M261 122l-2.5 2.5 2.5 2.5" fill="none" stroke="#3d7cc9" stroke-width="1.8"/><path d="M280 118.5H296" stroke="#555" stroke-width="1"/><path d="M286 121.5H296" stroke="#555" stroke-width="1"/><path d="M286 124.5H296" stroke="#555" stroke-width="1"/><path d="M286 127.5H296" stroke="#555" stroke-width="1"/><path d="M280 130.5H296" stroke="#555" stroke-width="1"/><path d="M280 124.5h6M283.5 122l2.5 2.5-2.5 2.5" fill="none" stroke="#3d7cc9" stroke-width="1.8"/><path d="M303.5 114V136" stroke="#d8d8d8" stroke-width="1"/><text x="0" y="0" transform="translate(315 129.5) rotate(-45)" font-family="Liberation Sans" font-size="11.5" fill="#444">ab</text><path d="M316 131l10-10M323 121h3v3" fill="none" stroke="#444" stroke-width="1.1"/><path d="M331.0 123.75h6l-3.0 3.5z" fill="#555"/><rect x="372" y="95" width="15" height="8" fill="#fff" stroke="#2f6fba" stroke-width="1.8"/><circle cx="378.5" cy="99" r="2.1" fill="#2f6fba"/><ellipse cx="383.5" cy="101.2" rx="3.8" ry="1.6" fill="#f2a679" stroke="#fff" stroke-width=".8"/><ellipse cx="384" cy="104.4" rx="3.8" ry="1.6" fill="#f2a679" stroke="#fff" stroke-width=".8"/><ellipse cx="379.5" cy="106" rx="3.8" ry="1.6" fill="#f2a679" stroke="#fff" stroke-width=".8"/><ellipse cx="379.5" cy="109" rx="3.8" ry="1.6" fill="#f2a679" stroke="#fff" stroke-width=".8"/><path d="M392.5 101.25h6l-3.0 3.5z" fill="#555"/><text x="406" y="107.5" font-family="Liberation Sans" font-weight="bold" font-size="15" fill="#444">%</text><circle cx="434.5" cy="99.8" r="1.9" fill="#444"/><path d="M436.1 100c0 2-1 3.5-2.8 4.5" fill="none" stroke="#444" stroke-width="1.5"/><text x="376" y="123" font-family="Liberation Sans" font-size="9" fill="#333">.0</text><text x="372" y="130.5" font-family="Liberation Sans" font-size="9" fill="#333">.00</text><path d="M371 119.5h5M373 117.5l-2 2 2 2" fill="none" stroke="#2f6fba" stroke-width="1.2"/><text x="395" y="123" font-family="Liberation Sans" font-size="9" fill="#333">.00</text><text x="400" y="130.5" font-family="Liberation Sans" font-size="9" fill="#333">.0</text><path d="M393 126.5h6M397 124.5l2 2-2 2" fill="none" stroke="#2f6fba" stroke-width="1.2"/><rect x="458.5" y="71.5" width="14" height="12" fill="none" stroke="#666" stroke-width="1"/><path d="M458 75.5H473" stroke="#999" stroke-width="1"/><path d="M458 79.5H473" stroke="#999" stroke-width="1"/><path d="M465.5 71V84" stroke="#999" stroke-width="1"/><path d="M469.5 71V84" stroke="#999" stroke-width="1"/><rect x="459" y="72" width="6" height="3" fill="#e0452d"/><rect x="459" y="76" width="8" height="3" fill="#3d7cc9"/><rect x="459" y="80" width="5" height="3" fill="#e0452d"/><rect x="464.5" y="78.5" width="10" height="8.5" fill="#fff" stroke="#555" stroke-width="1"/><path d="M466.5 82h6M466.5 84.2h6M471 80.5l-2.5 5.5" stroke="#444" stroke-width="0.9"/><path d="M531.5 78.25h6l-3.0 3.5z" fill="#555"/><rect x="459" y="95" width="14" height="11" fill="#d4dde2"/><rect x="458.5" y="94.5" width="15" height="12" fill="none" stroke="#777" stroke-width="1"/><path d="M458 98.5H474" stroke="#aaa" stroke-width="1"/><path d="M458 102.5H474" stroke="#aaa" stroke-width="1"/><path d="M462.5 94V107" stroke="#aaa" stroke-width="1"/><path d="M466.5 94V107" stroke="#aaa" stroke-width="1"/><path d="M470.5 94V107" stroke="#aaa" stroke-width="1"/><path d="M475 96.5l-8 8" stroke="#777" stroke-width="2.6"/><path d="M460.5 110.5c1-4 3-6.5 6-6.8l2 2c-.3 3-3 5-8 4.8z" fill="#2f6fba"/><path d="M555.5 101.25h6l-3.0 3.5z" fill="#555"/><rect x="458.5" y="117.5" width="15" height="12" fill="none" stroke="#777" stroke-width="1"/><rect x="459" y="118" width="14" height="4" fill="#fff"/><rect x="459" y="122" width="14" height="7" fill="#d4dde2"/><path d="M458 121.5H474" stroke="#aaa" stroke-width="1"/><path d="M458 125.5H474" stroke="#aaa" stroke-width="1"/><path d="M462.5 121V130" stroke="#aaa" stroke-width="1"/><path d="M475 119.5l-8 8" stroke="#777" stroke-width="2.6"/><path d="M460.5 133.5c1-4 3-6.5 6-6.8l2 2c-.3 3-3 5-8 4.8z" fill="#2f6fba"/><path d="M543.5 124.25h6l-3.0 3.5z" fill="#555"/><rect x="577.5" y="71.5" width="8" height="15" fill="none" stroke="#666" stroke-width="1"/><path d="M577 76.5H586" stroke="#666" stroke-width="1"/><path d="M577 81.5H586" stroke="#666" stroke-width="1"/><path d="M581.5 71V76" stroke="#666" stroke-width="1"/><path d="M581.5 81V87" stroke="#666" stroke-width="1"/><rect x="578" y="77" width="7" height="4" fill="#f7f7f7"/><rect x="586.5" y="76.5" width="7" height="4" fill="#ccc" stroke="#666" stroke-width="1"/><path d="M578 79h7M580.5 76.5l-2.5 2.5 2.5 2.5" fill="none" stroke="#2f6fba" stroke-width="1.4"/><path d="M629.5 78.25h6l-3.0 3.5z" fill="#555"/><rect x="577.5" y="94.5" width="8" height="15" fill="none" stroke="#666" stroke-width="1"/><path d="M577 99.5H586" stroke="#666" stroke-width="1"/><path d="M577 104.5H586" stroke="#666" stroke-width="1"/><path d="M581.5 94V99" stroke="#666" stroke-width="1"/><path d="M581.5 104V110" stroke="#666" stroke-width="1"/><rect x="581.5" y="99.5" width="4" height="4" fill="#ccc"/><path d="M586 98.5l6 6M592 98.5l-6 6" stroke="#e0573d" stroke-width="1.6"/><path d="M629.5 101.25h6l-3.0 3.5z" fill="#555"/><path d="M578 117.5h13M577.5 115.5v4M591.5 115.5v4M580 116l-1.8 1.5 1.8 1.5M589 116l1.8 1.5-1.8 1.5" stroke="#2f6fba" fill="none" stroke-width="1"/><rect x="577.5" y="120.5" width="14" height="11" fill="none" stroke="#555" stroke-width="1"/><path d="M577 124.5H592" stroke="#777" stroke-width="1"/><path d="M577 128.5H592" stroke="#777" stroke-width="1"/><path d="M581.5 120V132" stroke="#777" stroke-width="1"/><path d="M586.5 120V132" stroke="#777" stroke-width="1"/><rect x="581" y="124" width="5" height="4" fill="#2f6fba"/><path d="M623.5 124.25h6l-3.0 3.5z" fill="#555"/><circle cx="667.5" cy="81" r="3.6" fill="none" stroke="#2f6fba" stroke-width="1.8"/><path d="M664.8 83.8l-3.8 3.8" stroke="#2f6fba" stroke-width="2.2"/><path d="M665.0 123.75h6l-3.0 3.5z" fill="#555"/><path d="M709.5 153l4-4 4 4" fill="none" stroke="#555" stroke-width="1.4"/><path d="M95.5 180.75h8l-4.0 4.5z" fill="#666"/><rect x="123" y="179.5" width="2" height="2" fill="#aaa"/><rect x="123" y="183.5" width="2" height="2" fill="#aaa"/><rect x="123" y="187.5" width="2" height="2" fill="#aaa"/><path d="M153.5 179.5l10 9.5M163.5 179.5l-10 9.5" stroke="#b9b9b9" stroke-width="1.4"/><path d="M188 184.5l4 4 9-9" fill="none" stroke="#b8c4c2" stroke-width="2"/><text x="224.5" y="187.5" font-family="Liberation Serif" font-style="italic" font-weight="bold" font-size="12.5" fill="#555">f</text><text x="229.5" y="188.5" font-family="Liberation Serif" font-style="italic" font-weight="bold" font-size="10.5" fill="#555">x</text><path d="M711 181.5l3.5 3.5 3.5-3.5" fill="none" stroke="#555" stroke-width="1.6"/><path d="M27 212v11h-11z" fill="#b9b9b2"/><path d="M714 219h7l-3.5-3.5z" fill="#666"/><path d="M714 497.5h7l-3.5 3.5z" fill="#666"/><path d="M458.5 520.5l4-3.5v7z" fill="#666"/><path d="M701.5 520.5l-4-3.5v7z" fill="#666"/><rect x="437" y="515" width="2" height="2" fill="#b0b0a8"/><rect x="437" y="519" width="2" height="2" fill="#b0b0a8"/><rect x="437" y="523" width="2" height="2" fill="#b0b0a8"/><path d="M29 519.5l4-3.5v7z" fill="#c2c2c2"/><path d="M62 519.5l-4-3.5v7z" fill="#c2c2c2"/><circle cx="295" cy="519.5" r="6.8" fill="none" stroke="#666" stroke-width="1.3"/><path d="M291.5 519.5h7M295 516v7" stroke="#666" stroke-width="1.5"/><rect x="432.5" y="538.5" width="12" height="12" fill="none" stroke="#555" stroke-width="1"/><path d="M436.5 538.5v12M440.5 538.5v12M432.5 542.5h12M432.5 546.5h12" stroke="#555" stroke-width="1"/><rect x="470.5" y="538.5" width="13" height="12" fill="none" stroke="#555" stroke-width="1"/><rect x="473.5" y="540.5" width="7" height="8" fill="none" stroke="#555" stroke-width="1"/><path d="M475 542.5h4M475 544.5h4M475 546.5h4" stroke="#555" stroke-width="1"/><path d="M508.5 538.5h13v12h-13zM508.5 545.5h8v-7M512.5 538.5v5" fill="none" stroke="#555" stroke-width="1"/><path d="M540 544.5h5" stroke="#555" stroke-width="1.6"/><path d="M549 544.5h100" stroke="#999" stroke-width="1"/><rect x="597" y="539" width="4" height="11" fill="#555"/><path d="M653 544.5h8M657 540.5v8" stroke="#555" stroke-width="1.6"/><path d="M374.5 328.5v15.5l3.8-3.6 3.2 6.4 2.4-1.1-3.1-6.2h5.2z" fill="#fff" stroke="#000" stroke-width="1" stroke-linejoin="round"/></svg>
<svg class="a" style="left:0;top:0;z-index:31;mix-blend-mode:multiply" width="728" height="556" viewBox="0 0 728 556"><g opacity="0.8"><circle cx="643" cy="477.5" r="53.5" fill="rgba(210,210,200,0.18)" stroke="#7d7d7d" stroke-width="2"/><circle cx="643" cy="477.5" r="39.5" fill="rgba(225,225,215,0.25)" stroke="#8cc3bb" stroke-width="1.3"/><defs><path id="wmu" d="M603.1 461.4A43 43 0 0 1 682.9 461.4"/><path id="wml" d="M594.7 464.6A50 50 0 1 0 691.3 464.6"/></defs><text font-family="Liberation Sans" font-size="9.5" fill="#777"><textPath href="#wmu" textLength="102" lengthAdjust="spacing">广州科技贸易职业学院</textPath></text><text font-family="Liberation Sans" font-size="7" fill="#8a8a8a"><textPath href="#wml" textLength="183" lengthAdjust="spacing">Guangzhou Vocational College of Technology &amp; Business</textPath></text><path d="M645 460L664 448V493L643 505L622 493V448Z" fill="#f4f4f0" stroke="#9a9a9a" stroke-width="1.5"/><path d="M626 470h17v25l-17-3z" fill="#bcd9b4"/><path d="M646 458l14-6v42l-14 6z" fill="#9fc0b8"/><path d="M646 480l14-4v18l-14 6z" fill="#8aaec0"/><path d="M643 460V505" stroke="#9a9a9a" stroke-width="1.2"/><rect x="636" y="479" width="14" height="8" fill="#fff" stroke="#aaa" stroke-width="1"/><path d="M597 496c10-8 25-8 33-2M689 493c-10-8-25-8-33-2" fill="none" stroke="#777" stroke-width="2"/><path d="M622 500c8 12 34 12 42 0" fill="none" stroke="#888" stroke-width="1.5"/><text x="634" y="512" font-family="Liberation Serif" font-size="8" fill="#666">1984</text></g></svg>
</body></html>
